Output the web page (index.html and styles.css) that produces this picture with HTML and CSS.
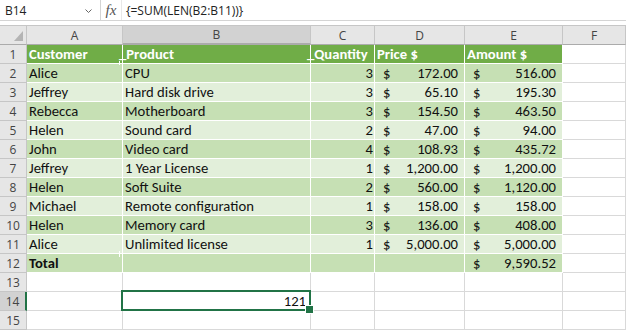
FILE: index.html
```html
<!DOCTYPE html>
<html lang="en">
  <head>
    <meta charset="UTF-8" />
    <title>Sheet - array formula</title>
    <link rel="stylesheet" href="styles.css">
  </head>
  <body>
    <div class="formula-bar">
      <div class="name-box">
        <span>B14</span>
        <svg class="chevron" width="7" height="4" viewBox="0 0 7 4"><path d="M0.5 0.5 L3.5 3.5 L6.5 0.5" fill="none" stroke="#666" stroke-width="1"/></svg>
      </div>
      <div class="fx">fx</div>
      <div class="formula">{=SUM(LEN(B2:B11))}</div>
    </div>
    <div class="bar-gap"></div>

    <div class="sheet">
      <!-- column headers -->
      <div class="hd corner">
        <svg width="9" height="10" viewBox="0 0 9 10"><polygon points="9,0 9,10 0,10" fill="#b4b4b4"/></svg>
      </div>
      <div class="hd col">A</div>
      <div class="hd col sel-col">B</div>
      <div class="hd col">C</div>
      <div class="hd col">D</div>
      <div class="hd col">E</div>
      <div class="hd col">F</div>

      <!-- row 1 -->
      <div class="hd row">1</div>
      <div class="c t head">Customer</div>
      <div class="c t head mark-top"><span class="us">_</span>Product</div>
      <div class="c t head lead"><span class="us">_</span>Quantity</div>
      <div class="c t head">Price $</div>
      <div class="c t head">Amount $</div>
      <div class="c"></div>

      <div class="hd row">2</div>
      <div class="c t dark">Alice</div>
      <div class="c t dark">CPU</div>
      <div class="c t dark num">3</div>
      <div class="c t dark acc"><span>$</span><span>172.00</span></div>
      <div class="c t dark acc"><span>$</span><span>516.00</span></div>
      <div class="c"></div>

      <div class="hd row">3</div>
      <div class="c t light">Jeffrey</div>
      <div class="c t light">Hard disk drive</div>
      <div class="c t light num">3</div>
      <div class="c t light acc"><span>$</span><span>65.10</span></div>
      <div class="c t light acc"><span>$</span><span>195.30</span></div>
      <div class="c"></div>

      <div class="hd row">4</div>
      <div class="c t dark">Rebecca</div>
      <div class="c t dark">Motherboard</div>
      <div class="c t dark num">3</div>
      <div class="c t dark acc"><span>$</span><span>154.50</span></div>
      <div class="c t dark acc"><span>$</span><span>463.50</span></div>
      <div class="c"></div>

      <div class="hd row">5</div>
      <div class="c t light">Helen</div>
      <div class="c t light">Sound card</div>
      <div class="c t light num">2</div>
      <div class="c t light acc"><span>$</span><span>47.00</span></div>
      <div class="c t light acc"><span>$</span><span>94.00</span></div>
      <div class="c"></div>

      <div class="hd row">6</div>
      <div class="c t dark">John</div>
      <div class="c t dark">Video card</div>
      <div class="c t dark num">4</div>
      <div class="c t dark acc"><span>$</span><span>108.93</span></div>
      <div class="c t dark acc"><span>$</span><span>435.72</span></div>
      <div class="c"></div>

      <div class="hd row">7</div>
      <div class="c t light">Jeffrey</div>
      <div class="c t light">1 Year License</div>
      <div class="c t light num">1</div>
      <div class="c t light acc"><span>$</span><span>1,200.00</span></div>
      <div class="c t light acc"><span>$</span><span>1,200.00</span></div>
      <div class="c"></div>

      <div class="hd row">8</div>
      <div class="c t dark">Helen</div>
      <div class="c t dark">Soft Suite</div>
      <div class="c t dark num">2</div>
      <div class="c t dark acc"><span>$</span><span>560.00</span></div>
      <div class="c t dark acc"><span>$</span><span>1,120.00</span></div>
      <div class="c"></div>

      <div class="hd row">9</div>
      <div class="c t light">Michael</div>
      <div class="c t light">Remote configuration</div>
      <div class="c t light num">1</div>
      <div class="c t light acc"><span>$</span><span>158.00</span></div>
      <div class="c t light acc"><span>$</span><span>158.00</span></div>
      <div class="c"></div>

      <div class="hd row">10</div>
      <div class="c t dark">Helen</div>
      <div class="c t dark">Memory card</div>
      <div class="c t dark num">3</div>
      <div class="c t dark acc"><span>$</span><span>136.00</span></div>
      <div class="c t dark acc"><span>$</span><span>408.00</span></div>
      <div class="c"></div>

      <div class="hd row">11</div>
      <div class="c t light">Alice</div>
      <div class="c t light">Unlimited license</div>
      <div class="c t light num">1</div>
      <div class="c t light acc"><span>$</span><span>5,000.00</span></div>
      <div class="c t light acc"><span>$</span><span>5,000.00</span></div>
      <div class="c"></div>

      <div class="hd row">12</div>
      <div class="c t dark bold">Total</div>
      <div class="c t dark mark-mid"></div>
      <div class="c t dark"></div>
      <div class="c t dark"></div>
      <div class="c t dark acc"><span>$</span><span>9,590.52</span></div>
      <div class="c"></div>

      <div class="hd row">13</div>
      <div class="c"></div>
      <div class="c"></div>
      <div class="c"></div>
      <div class="c"></div>
      <div class="c"></div>
      <div class="c"></div>

      <div class="hd row sel-row">14</div>
      <div class="c"></div>
      <div class="c num active">121</div>
      <div class="c"></div>
      <div class="c"></div>
      <div class="c"></div>
      <div class="c"></div>

      <div class="hd row">15</div>
      <div class="c"></div>
      <div class="c"></div>
      <div class="c"></div>
      <div class="c"></div>
      <div class="c"></div>
      <div class="c"></div>
    </div>
  </body>
</html>
```

FILE: styles.css
```css
* {
  box-sizing: border-box;
  margin: 0;
  padding: 0;
}

body {
  width: 626px;
  height: 330px;
  overflow: hidden;
  background-color: #fff;
  font-family: "Open Sans", "Noto Sans", sans-serif;
  color: #222;
}

/* formula bar */
.formula-bar {
  display: flex;
  height: 21px;
  border-bottom: 1px solid #d4d4d4;
  font-size: 12px;
}

.name-box {
  width: 101px;
  display: flex;
  align-items: center;
  justify-content: space-between;
  padding: 0 8px 0 5px;
  border-right: 1px solid #d4d4d4;
}

.chevron {
  margin-top: 1px;
}

.fx {
  width: 21px;
  display: flex;
  align-items: center;
  justify-content: center;
  border-right: 1px solid #e8e8e8;
  font-family: "Liberation Serif", serif;
  font-style: italic;
  font-size: 15px;
  color: #555;
}

.formula {
  display: flex;
  align-items: center;
  padding-left: 4px;
}

.bar-gap {
  height: 4px;
}

/* sheet grid */
.sheet {
  display: grid;
  grid-template-columns: 27px 96px 188px 64px 90px 98px 1fr;
  grid-auto-rows: 19px;
  border-top: 1px solid #c6c6c6;
}

.hd {
  background-color: #e6e6e6;
  border-right: 1px solid #c6c6c6;
  border-bottom: 1px solid #c6c6c6;
  font-size: 12px;
  color: #444;
  display: flex;
  align-items: center;
  justify-content: center;
}

.hd.col {
  border-bottom-color: #ababab;
}

.corner {
  justify-content: flex-end;
  align-items: flex-end;
  padding: 0 3px 3px 0;
  border-bottom-color: #ababab;
}

.corner svg {
  display: block;
}

.sel-col {
  background-color: #d2d2d2;
  border-bottom: 2px solid #217346;
}

.sel-row {
  background-color: #d2d2d2;
  border-right: 2px solid #217346;
}

.c {
  position: relative;
  border-right: 1px solid #d9d9d9;
  border-bottom: 1px solid #d9d9d9;
  padding: 0 2px;
  font-family: Calibri, Carlito, Lato, sans-serif;
  font-size: 14.67px;
  line-height: 18px;
  white-space: nowrap;
  color: #111;
}

/* table region */
.c.t {
  border-color: #fff;
}

.head {
  background-color: #70ad47;
  color: #fff;
  font-weight: bold;
}

.dark {
  background-color: #c6e0b4;
}

.light {
  background-color: #e2efda;
}

.bold {
  font-weight: bold;
}

.num {
  text-align: right;
  padding-right: 1px;
}

.acc {
  display: flex;
  justify-content: space-between;
  padding: 0 6px 0 8px;
}

/* leading underscore sitting on the header's lower edge */
.us {
  position: relative;
  top: -1px;
  z-index: 2;
}

.lead,
.mark-top {
  text-indent: -6px;
}

.mark-top::after {
  content: "";
  position: absolute;
  left: -4px;
  top: 16px;
  width: 1px;
  height: 4px;
  background-color: #fff;
  z-index: 1;
}

.mark-mid::after {
  content: "";
  position: absolute;
  left: -4px;
  top: -3px;
  width: 1px;
  height: 6px;
  background-color: #fff;
}

/* active cell */
.active {
  padding-right: 4px;
}

.active::after {
  content: "";
  position: absolute;
  top: -2px;
  left: -2px;
  right: -1px;
  bottom: -1px;
  border: 2px solid #217346;
}

.active::before {
  content: "";
  position: absolute;
  right: -4px;
  bottom: -4px;
  width: 7px;
  height: 7px;
  background-color: #217346;
  border: 1px solid #fff;
  z-index: 1;
}
```
